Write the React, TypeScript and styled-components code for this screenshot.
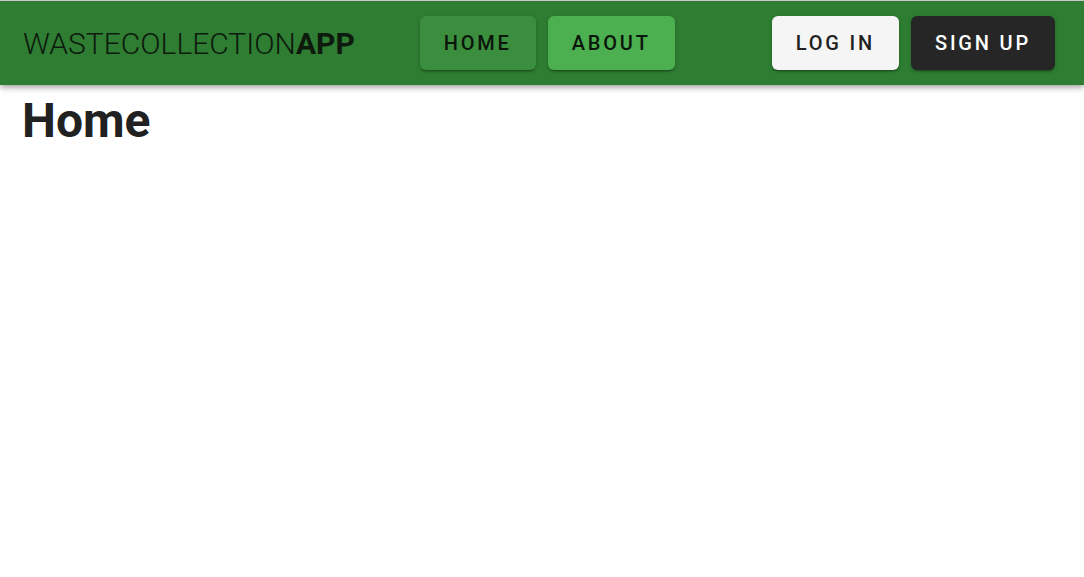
import React from "react";
import styled, { createGlobalStyle } from "styled-components";

const Global = createGlobalStyle`
  html, body { margin: 0; padding: 0; background: #fff; }
  body { font-family: Roboto, "Noto Sans", sans-serif; border-top: 1px solid #c8c8c8; }
`;

const AppBar = styled.header`
  height: 84px;
  background: #2e7d32;
  display: flex;
  align-items: center;
  padding: 0 29px 0 23px;
  box-shadow: 0 2px 4px -1px rgba(0,0,0,0.2), 0 4px 5px 0 rgba(0,0,0,0.14), 0 1px 10px 0 rgba(0,0,0,0.12);
  position: relative;
`;

const Logo = styled.div`
  font-size: 30px;
  font-weight: 300;
  color: #0d1a0d;
  margin-right: 65px;
  b { font-weight: 700; }
`;

const Nav = styled.nav`
  display: flex;
  gap: 12px;
  flex: 1;
`;

const Actions = styled.div`
  display: flex;
  gap: 12px;
`;

const Button = styled.button<{ $bg: string; $fg: string }>`
  height: 54px;
  padding: 0 24px;
  border: none;
  border-radius: 6px;
  background: ${(p) => p.$bg};
  color: ${(p) => p.$fg};
  font-family: Roboto, sans-serif;
  font-size: 20px;
  font-weight: 500;
  letter-spacing: 2.8px;
  text-transform: uppercase;
  box-shadow: 0 3px 1px -2px rgba(0,0,0,0.2), 0 2px 2px 0 rgba(0,0,0,0.14), 0 1px 5px 0 rgba(0,0,0,0.12);
  cursor: pointer;
`;

const Title = styled.h1`
  margin: 7px 0 0 22px;
  font-size: 48px;
  font-weight: 700;
  line-height: 1.2;
  color: #212121;
`;

export default function App() {
  return (
    <>
      <Global />
      <AppBar>
        <Logo>
          WASTECOLLECTION<b>APP</b>
        </Logo>
        <Nav>
          <Button $bg="#3a8e3d" $fg="#0b160b">Home</Button>
          <Button $bg="#4caf50" $fg="#0b160b">About</Button>
        </Nav>
        <Actions>
          <Button $bg="#f5f5f5" $fg="#212121">Log in</Button>
          <Button $bg="#262626" $fg="#ffffff">Sign up</Button>
        </Actions>
      </AppBar>
      <Title>Home</Title>
    </>
  );
}
